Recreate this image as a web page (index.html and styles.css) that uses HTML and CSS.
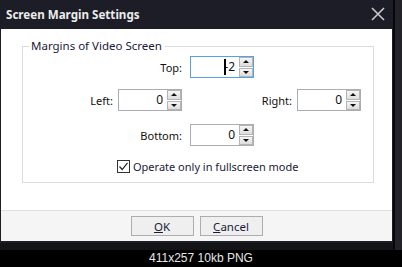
FILE: index.html
```html
<!DOCTYPE html>
<html lang="en">
<head>
    <meta charset="UTF-8">
    <title>Screen Margin Settings</title>
    <link rel="stylesheet" href="styles.css">
</head>
<body>
    <div class="shot">
        <div class="frame">
            <div class="window">
                <div class="titlebar">
                    <span class="title">Screen Margin Settings</span>
                    <svg class="close" width="14" height="14" viewBox="0 0 14 14">
                        <path d="M1 1 L13 13 M13 1 L1 13" stroke="#c9c9cc" stroke-width="1.6" fill="none"/>
                    </svg>
                </div>
                <div class="content">
                    <fieldset class="group">
                        <legend>Margins of Video Screen</legend>
                        <div class="row row-single">
                            <label class="lbl">Top:</label>
                            <div class="spin focused">
                                <span class="val"><span class="minus">-</span>2</span>
                                <span class="arrows">
                                    <span class="arr"><svg width="6" height="3" viewBox="0 0 6 3"><path d="M0 3 L3 0 L6 3 Z" fill="#111"/></svg></span>
                                    <span class="arr"><svg width="6" height="3" viewBox="0 0 6 3"><path d="M0 0 L6 0 L3 3 Z" fill="#111"/></svg></span>
                                </span>
                            </div>
                        </div>
                        <div class="row row-double">
                            <label class="lbl">Left:</label>
                            <div class="spin">
                                <span class="val">0</span>
                                <span class="arrows">
                                    <span class="arr"><svg width="6" height="3" viewBox="0 0 6 3"><path d="M0 3 L3 0 L6 3 Z" fill="#111"/></svg></span>
                                    <span class="arr"><svg width="6" height="3" viewBox="0 0 6 3"><path d="M0 0 L6 0 L3 3 Z" fill="#111"/></svg></span>
                                </span>
                            </div>
                            <label class="lbl">Right:</label>
                            <div class="spin">
                                <span class="val">0</span>
                                <span class="arrows">
                                    <span class="arr"><svg width="6" height="3" viewBox="0 0 6 3"><path d="M0 3 L3 0 L6 3 Z" fill="#111"/></svg></span>
                                    <span class="arr"><svg width="6" height="3" viewBox="0 0 6 3"><path d="M0 0 L6 0 L3 3 Z" fill="#111"/></svg></span>
                                </span>
                            </div>
                        </div>
                        <div class="row row-single">
                            <label class="lbl">Bottom:</label>
                            <div class="spin">
                                <span class="val">0</span>
                                <span class="arrows">
                                    <span class="arr"><svg width="6" height="3" viewBox="0 0 6 3"><path d="M0 3 L3 0 L6 3 Z" fill="#111"/></svg></span>
                                    <span class="arr"><svg width="6" height="3" viewBox="0 0 6 3"><path d="M0 0 L6 0 L3 3 Z" fill="#111"/></svg></span>
                                </span>
                            </div>
                        </div>
                        <div class="check-row">
                            <span class="checkbox">
                                <svg width="11" height="11" viewBox="0 0 11 11">
                                    <path d="M1.5 5.5 L4.2 8.5 L9.5 1.8" stroke="#222" stroke-width="1.2" fill="none"/>
                                </svg>
                            </span>
                            <span>Operate only in fullscreen mode</span>
                        </div>
                    </fieldset>
                </div>
                <div class="footer">
                    <button class="btn"><u>O</u>K</button>
                    <button class="btn"><u>C</u>ancel</button>
                </div>
            </div>
            <div class="edge"></div>
        </div>
        <div class="caption">411x257 10kb PNG</div>
    </div>
</body>
</html>
```

FILE: styles.css
```css
body {
    margin: 0;
    background: #000;
    font-family: "Noto Sans", "Open Sans", sans-serif;
    font-size: 11px;
    color: #111;
}
.shot {
    width: 402px;
    height: 267px;
    display: flex;
    flex-direction: column;
    overflow: hidden;
}
.frame {
    display: flex;
    background: #1b1b22;
}
.window {
    width: 391px;
    padding-left: 1px;
    padding-right: 1px;
    padding-bottom: 2px;
    background: #1d1d27;
    border-bottom: 7px solid #141417;
}
.edge {
    flex: 1;
    border-left: 2px solid #08080a;
    background: #222228;
}
.titlebar {
    height: 29px;
    display: flex;
    align-items: center;
    justify-content: space-between;
    padding: 0 7px 0 5px;
}
.title {
    color: #ececec;
    font-weight: bold;
    font-size: 11.6px;
}
.close {
    margin-top: -1px;
}
.content {
    background: #fff;
    height: 181px;
    padding: 9px 0 0 21px;
    box-sizing: border-box;
}
.group {
    margin: 0;
    padding: 0;
    width: 352px;
    height: 145px;
    box-sizing: border-box;
    border: 1px solid #dcdcdc;
}
.group legend {
    padding: 0 3px 0 2px;
    margin-left: 6px;
    font-size: 11.5px;
    line-height: 16px;
    color: #1a1a3a;
}
.row {
    display: flex;
    align-items: center;
    height: 22px;
}
.row-single {
    margin-top: 2px;
}
.row-double {
    margin-top: 11px;
    margin-bottom: 13px;
}
.lbl {
    text-align: right;
}
.row-single .lbl {
    width: 159px;
    margin-right: 8px;
}
.row-double .lbl {
    width: 90px;
    margin-right: 5px;
}
.row-double .lbl + .spin + .lbl {
    width: 110px;
}
.spin {
    width: 64px;
    height: 22px;
    box-sizing: border-box;
    border: 1px solid #abadb3;
    display: flex;
    background: #fff;
}
.spin.focused {
    border-color: #5a9fe0;
}
.val {
    flex: 1;
    text-align: right;
    padding-right: 4px;
    line-height: 20px;
    font-size: 12px;
}
.minus {
    position: relative;
}
.minus::before {
    content: "";
    position: absolute;
    left: 0;
    top: 1px;
    width: 2px;
    height: 16px;
    background: #000;
}
.arrows {
    width: 14px;
    display: flex;
    flex-direction: column;
    gap: 1px;
}
.arr {
    flex: 1;
    border: 1px solid #b4b4b4;
    background: linear-gradient(#f6f6f6, #dddddd);
    display: flex;
    align-items: center;
    justify-content: center;
}
.check-row {
    display: flex;
    align-items: center;
    gap: 3px;
    margin-top: 13px;
    padding-left: 94px;
    color: #1a1a3a;
}
.checkbox {
    width: 13px;
    height: 13px;
    box-sizing: border-box;
    border: 1px solid #333;
    display: flex;
    align-items: center;
    justify-content: center;
    background: #fff;
}
.footer {
    height: 31px;
    box-sizing: border-box;
    background: #f5f5f5;
    border-top: 1px solid #dfdfdf;
    display: flex;
    justify-content: center;
    align-items: flex-start;
    gap: 6px;
    padding-top: 5px;
}
.btn {
    width: 63px;
    height: 20px;
    padding: 0;
    font-family: inherit;
    font-size: 11.5px;
    color: #1a1a3a;
    background: #efefef;
    border: 1px solid #adadad;
}
.caption {
    flex: 1;
    display: flex;
    align-items: center;
    justify-content: center;
    color: #e6e6e6;
    font-family: "Liberation Sans", Arial, sans-serif;
    font-size: 12px;
    padding-bottom: 1px;
}
```
